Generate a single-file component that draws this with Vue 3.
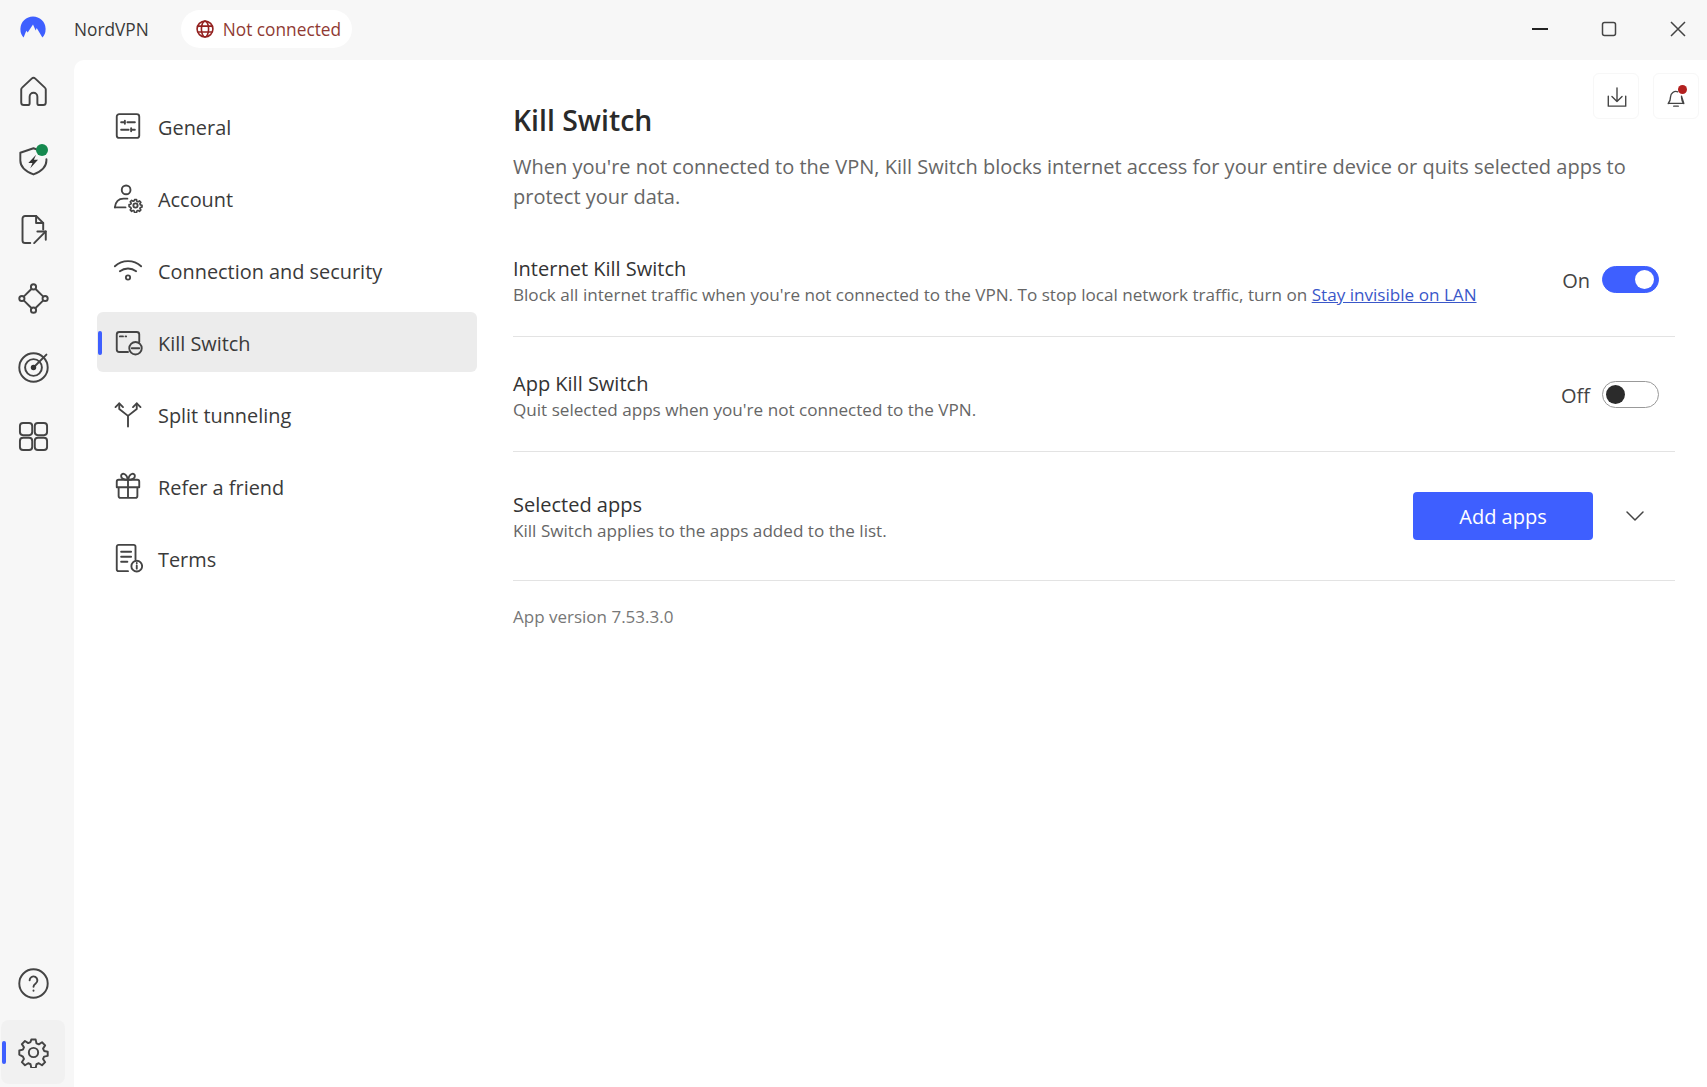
<script setup>
const gear = 'M10.3 2h3.4l.6 2.9 1.8.8 2.5-1.6 2.4 2.4-1.6 2.5.8 1.8 2.8.6v3.2l-2.8.6-.8 1.8 1.6 2.5-2.4 2.4-2.5-1.6-1.8.8-.6 2.9h-3.4l-.6-2.9-1.8-.8-2.5 1.6-2.4-2.4 1.6-2.5-.8-1.8L1 13.6v-3.2l2.8-.6.8-1.8-1.6-2.5 2.4-2.4 2.5 1.6 1.8-.8z'
const rail = [
  { id: 'home', paths: ['M4.500 22.500h3a1.500 1.500 0 0 0 1.500-1.500v-5a3 3 0 0 1 6 0v5a1.500 1.500 0 0 0 1.500 1.500h3a2 2 0 0 0 2-2V10.500a2 2 0 0 0-.7-1.500L13.400 2a2 2 0 0 0-2.800 0L3.200 9a2 2 0 0 0-.7 1.500v10a2 2 0 0 0 2 2z'] },
  { id: 'shield', paths: ['M18 4.800L12 2.500 1.800 6v6c0 5 4 8.500 10.200 10.800C18 20.500 22 17 22 12v-1'], solid: ['M14 7.500l-6 6.500h3.200L9.500 18l6-6.500h-3.200z'], dot: true },
  { id: 'file', paths: ['M9.500 22.500H5.500a2 2 0 0 1-2-2v-17a2 2 0 0 1 2-2h8.500l5.500 5.500v5', 'M14 1.500V7h5.500', 'M12.500 22.500l9-9', 'M15 13.500h6.500V20'] },
  { id: 'mesh', paths: ['M10.200 4.800L4.800 10.200M13.800 4.800l5.400 5.400M4.800 13.800l5.400 5.400M19.200 13.800l-5.400 5.400'], circles: [[12, 3, 2], [3, 12, 2], [21, 12, 2], [12, 21, 2]] },
  { id: 'target', paths: ['M12 12l10-10'], circles: [[12, 12, 11], [12, 12, 6.500]], solidCircles: [[12, 12, 2.100]] },
  { id: 'grid', rects: [[1.500, 1.500, 9.500, 9.500], [13, 1.500, 9.500, 9.500], [1.500, 13, 9.500, 9.500], [13, 13, 9.500, 9.500]] },
]
const nav = [
  { label: 'General', paths: ['M5 2.500h14a2 2 0 0 1 2 2v15a2 2 0 0 1-2 2H5a2 2 0 0 1-2-2v-15a2 2 0 0 1 2-2z', 'M6.500 9h2.500M11.500 9h6M6.500 15h6M15 15h2.500', 'M9.500 7.800v2.400M14.500 13.800v2.400'] },
  { label: 'Account', paths: ['M1.500 19.500c.5-4.500 3-7 7-7h3', 'M1.500 19.500H10'], circles: [[10.500, 5.500, 3.500], [18, 18, 1.700]], gear: true },
  { label: 'Connection and security', paths: ['M1.500 9c6-5.500 15-5.500 21 0', 'M5.500 13c3.800-3 9.200-3 13 0'], circles: [[12, 18, 1.700]] },
  { label: 'Kill Switch', active: true, paths: ['M12 20H5a2 2 0 0 1-2-2V6a2 2 0 0 1 2-2h14a2 2 0 0 1 2 2v6', 'M5.500 7.500H8M10 7.500h.5', 'M15 17h6'], circles: [[18, 17, 5]] },
  { label: 'Split tunneling', paths: ['M12 22v-8.500L5 8V3.500M12 13.500L19 8V3.500', 'M2 6.500l3-3 3 3M16 6.500l3-3 3 3'] },
  { label: 'Refer a friend', paths: ['M3 8.500A1.500 1.500 0 0 1 4.500 7h15A1.500 1.500 0 0 1 21 8.500V13H3zM4.500 13v7A1.500 1.500 0 0 0 6 21.500h12a1.500 1.500 0 0 0 1.500-1.500v-7M12 7v14.500', 'M12 7C8 7 6.500 5.500 6.500 4 6.500 1.500 10.500 1 12 7zM12 7c4 0 5.500-1.500 5.500-3 0-2.500-4-3-5.500 3z'] },
  { label: 'Terms', paths: ['M12 22.500H4.500a1.500 1.500 0 0 1-1.500-1.500V3A1.500 1.500 0 0 1 4.500 1.500h12A1.500 1.500 0 0 1 18 3v10', 'M6.500 7h8M6.500 11h8M6.500 15h5', 'M19 18v2.500M19 16v.2'], circles: [[19, 18.500, 4.300]] },
]
</script>

<template>
  <div class="app">
    <header class="titlebar">
      <svg class="logo" viewBox="0 0 26 22"><path d="M3.600 21.500A12.600 12.600 0 1 1 22.400 21.500L16.700 12l-1 2.600L13 8.500 7.700 16.500 6.300 14.800z" /></svg>
      <span class="brand">NordVPN</span>
      <div class="status">
        <svg class="globe" viewBox="0 0 24 24"><circle cx="12" cy="12" r="9.500" /><ellipse cx="12" cy="12" rx="4.300" ry="9.500" /><path d="M3.200 8.500h17.600M3.200 15.500h17.600" /></svg>
        <span>Not connected</span>
      </div>
      <div class="window-controls">
        <svg viewBox="0 0 20 20"><path class="min" d="M2 10h16" /></svg>
        <svg viewBox="0 0 20 20"><rect x="3.500" y="3.500" width="13" height="13" rx="2" /></svg>
        <svg viewBox="0 0 20 20"><path d="M3 3l14 14M17 3L3 17" /></svg>
      </div>
    </header>

    <div class="body">
      <aside class="rail">
        <div class="rail-top">
          <div v-for="item in rail" :key="item.id" class="rail-item">
            <svg class="icon rail-icon" viewBox="0 0 24 24">
              <path v-for="d in item.paths" :key="d" :d="d" />
              <path v-for="d in item.solid" :key="d" :d="d" class="solid" />
              <circle v-for="c in item.circles" :key="c.join()" :cx="c[0]" :cy="c[1]" :r="c[2]" />
              <circle v-for="c in item.solidCircles" :key="c.join()" :cx="c[0]" :cy="c[1]" :r="c[2]" class="solid" />
              <rect v-for="r in item.rects" :key="r.join()" :x="r[0]" :y="r[1]" :width="r[2]" :height="r[3]" rx="2.400" />
            </svg>
            <span v-if="item.dot" class="green-dot"></span>
          </div>
        </div>
        <div class="rail-bottom">
          <div class="rail-item">
            <svg class="icon rail-icon" viewBox="0 0 24 24"><circle cx="12" cy="12" r="11" /><path d="M9 9.500a3 3 0 1 1 4.700 2.500c-1.100.8-1.700 1.300-1.700 2.600M12 17.400v.3" /></svg>
          </div>
          <div class="rail-item selected">
            <span class="indicator"></span>
            <svg class="icon rail-icon" viewBox="0 0 24 24"><path :d="gear" /><circle cx="12" cy="12" r="3.600" /></svg>
          </div>
        </div>
      </aside>

      <main class="panel">
        <nav class="side-nav">
          <a v-for="item in nav" :key="item.label" class="nav-item" :class="{ active: item.active }">
            <span v-if="item.active" class="nav-indicator"></span>
            <svg class="icon nav-icon" viewBox="0 0 24 24">
              <path v-for="d in item.paths" :key="d" :d="d" />
              <circle v-for="c in item.circles" :key="c.join()" :cx="c[0]" :cy="c[1]" :r="c[2]" />
              <path v-if="item.gear" :d="gear" transform="translate(12.400 12.400) scale(.47)" class="small-gear" />
            </svg>
            <span>{{ item.label }}</span>
          </a>
        </nav>

        <section class="content">
          <div class="top-actions">
            <button class="tile">
              <svg class="icon tile-icon shifted" viewBox="0 0 24 24"><path d="M12 2v15M6.500 11.500L12 17l5.500-5.500M2.500 11v11h19V11" /></svg>
            </button>
            <button class="tile">
              <svg class="icon tile-icon" viewBox="0 0 24 24"><path d="M3.500 19c1.500-1.500 2.500-3.500 2.500-7a6 6 0 0 1 8-5.700M18 11c0 4.500 1 6.500 2.500 8zM3.500 19h17M9.500 22h5" /></svg>
              <span class="red-dot"></span>
            </button>
          </div>

          <h1>Kill Switch</h1>
          <p class="lead">When you're not connected to the VPN, Kill Switch blocks internet access for your entire device or quits selected apps to protect your data.</p>

          <div class="rows">
            <div class="row">
              <div class="row-text">
                <div class="row-title">Internet Kill Switch</div>
                <div class="row-sub">Block all internet traffic when you're not connected to the VPN. To stop local network traffic, turn on <a class="link">Stay invisible on LAN</a></div>
              </div>
              <div class="control">
                <span class="state">On</span>
                <span class="toggle on"><span class="knob"></span></span>
              </div>
            </div>

            <div class="row">
              <div class="row-text">
                <div class="row-title">App Kill Switch</div>
                <div class="row-sub">Quit selected apps when you're not connected to the VPN.</div>
              </div>
              <div class="control">
                <span class="state">Off</span>
                <span class="toggle"><span class="knob"></span></span>
              </div>
            </div>

            <div class="row apps">
              <div class="row-text">
                <div class="row-title">Selected apps</div>
                <div class="row-sub">Kill Switch applies to the apps added to the list.</div>
              </div>
              <div class="control gap">
                <button class="primary">Add apps</button>
                <svg class="chevron" viewBox="0 0 20 12"><path d="M2 2l8 8 8-8" /></svg>
              </div>
            </div>
          </div>

          <div class="version">App version 7.53.3.0</div>
        </section>
      </main>
    </div>
  </div>
</template>

<style>
html, body { margin: 0; background: #f7f7f7; }
</style>

<style scoped>
.app {
  width: 1707px;
  height: 1087px;
  display: flex;
  flex-direction: column;
  overflow: hidden;
  background: #f7f7f7;
  color: #333;
  font-family: "Open Sans", "Noto Sans", sans-serif;
}
.titlebar {
  height: 60px;
  flex: none;
  display: flex;
  align-items: center;
  padding: 0 15px 2px 20px;
  box-sizing: border-box;
}
.logo { width: 26px; height: 22px; fill: #3e5fff; margin-top: -4px; }
.brand { margin-left: 28px; font-size: 17.300px; color: #3a3a3a; }
.status {
  margin-left: 32px;
  height: 38px;
  display: flex;
  align-items: center;
  gap: 8px;
  padding: 0 11px 0 14px;
  border-radius: 19px;
  background: #fff;
  color: #8f3a33;
  font-size: 17.300px;
}
.globe { width: 20px; height: 20px; fill: none; stroke: #93211f; stroke-width: 1.900; }
.window-controls { margin-left: auto; display: flex; gap: 49px; align-items: center; padding-right: 4px; }
.window-controls svg { width: 20px; height: 20px; fill: none; stroke: #444; stroke-width: 1.500; }
.window-controls .min { stroke: #222; stroke-width: 2; }

.body { flex: 1; display: flex; min-height: 0; }
.rail {
  width: 74px;
  flex: none;
  display: flex;
  flex-direction: column;
  justify-content: space-between;
  padding: 0 0 3px 1px;
  box-sizing: border-box;
}
.rail-top, .rail-bottom { display: flex; flex-direction: column; gap: 5px; }
.rail-top { margin-top: -1px; }
.rail-item {
  position: relative;
  width: 64px;
  height: 64px;
  display: flex;
  align-items: center;
  justify-content: center;
  border-radius: 8px;
}
.rail-item.selected { background: #f1f1f1; }
.indicator {
  position: absolute;
  left: 1px;
  top: 21px;
  width: 4px;
  height: 23px;
  border-radius: 2px;
  background: #3e5fff;
}
.icon { fill: none; stroke: #444; stroke-width: 1.500; stroke-linecap: round; stroke-linejoin: round; }
.icon .solid { fill: #333; stroke: none; }
.icon .small-gear { stroke-width: 2.800; }
.rail-icon { width: 31px; height: 31px; }
.green-dot {
  position: absolute;
  top: 16px;
  left: 35px;
  width: 12px;
  height: 12px;
  border-radius: 50%;
  background: #15894f;
}

.panel {
  flex: 1;
  min-width: 0;
  display: flex;
  background: #fff;
  border-top-left-radius: 10px;
}
.side-nav {
  width: 403px;
  flex: none;
  box-sizing: border-box;
  padding: 36px 0 0 23px;
  display: flex;
  flex-direction: column;
  gap: 12px;
}
.nav-item {
  position: relative;
  width: 380px;
  height: 60px;
  display: flex;
  align-items: center;
  gap: 15px;
  padding: 2px 0 0 16px;
  box-sizing: border-box;
  border-radius: 6px;
  font-size: 19.900px;
  color: #3a3a3a;
}
.nav-item.active { background: #ececec; }
.nav-indicator {
  position: absolute;
  left: 1px;
  top: 19px;
  width: 4px;
  height: 24px;
  border-radius: 2px;
  background: #3e5fff;
}
.nav-icon { width: 30px; height: 30px; flex: none; margin-top: -3px; }

.content {
  position: relative;
  flex: 1;
  min-width: 0;
  padding: 36px 32px 0 36px;
  box-sizing: border-box;
}
.top-actions {
  position: absolute;
  top: 13px;
  right: 8px;
  display: flex;
  gap: 14px;
}
.tile {
  position: relative;
  width: 46px;
  height: 46px;
  padding: 0;
  display: flex;
  align-items: center;
  justify-content: center;
  background: #fff;
  border: 1px solid #f7f7f7;
  border-radius: 6px;
}
.tile-icon { width: 22px; height: 22px; margin-top: 2px; }
.tile-icon.shifted { margin-left: 1px; }
.red-dot {
  position: absolute;
  top: 11px;
  right: 11px;
  width: 9px;
  height: 9px;
  border-radius: 50%;
  background: #b3201f;
}
h1 {
  margin: 0;
  font-size: 28.400px;
  line-height: 48px;
  font-weight: 600;
  color: #2a2a2a;
}
.lead {
  margin: 8px 0 0;
  font-size: 20px;
  line-height: 30px;
  color: #666;
}
.rows { margin-top: 10px; }
.row {
  height: 115px;
  display: flex;
  align-items: center;
  justify-content: space-between;
  border-bottom: 1px solid #e3e3e3;
  box-sizing: border-box;
}
.row.apps { height: 129px; }
.row-text { padding-top: 4px; }
.row.apps .row-text { padding-top: 2px; }
.row-title { font-size: 20px; line-height: 27px; color: #333; }
.row-sub { font-size: 17.120px; line-height: 25px; color: #666; }
.link { color: #3a57c9; text-decoration: underline; }
.control { display: flex; align-items: center; gap: 12px; padding-right: 16px; }
.control.gap { gap: 32px; padding-right: 30px; }
.state { font-size: 20px; color: #444; padding-top: 2px; }
.toggle {
  position: relative;
  display: block;
  width: 57px;
  height: 27px;
  box-sizing: border-box;
  border-radius: 14px;
  border: 1px solid #999;
  background: #fff;
}
.knob {
  position: absolute;
  top: 3px;
  left: 3px;
  width: 19px;
  height: 19px;
  border-radius: 50%;
  background: #2b2b2b;
}
.toggle.on { background: #3e5fff; border-color: #3e5fff; }
.toggle.on .knob { left: auto; right: 4px; background: #fff; }
.primary {
  width: 180px;
  height: 48px;
  border: 0;
  border-radius: 4px;
  background: #3e5fff;
  color: #fff;
  font: 400 20px "Open Sans", "Noto Sans", sans-serif;
}
.chevron { width: 20px; height: 12px; fill: none; stroke: #444; stroke-width: 1.500; stroke-linecap: round; stroke-linejoin: round; }
.version { margin-top: 23px; font-size: 17px; line-height: 25px; color: #777; }
</style>
